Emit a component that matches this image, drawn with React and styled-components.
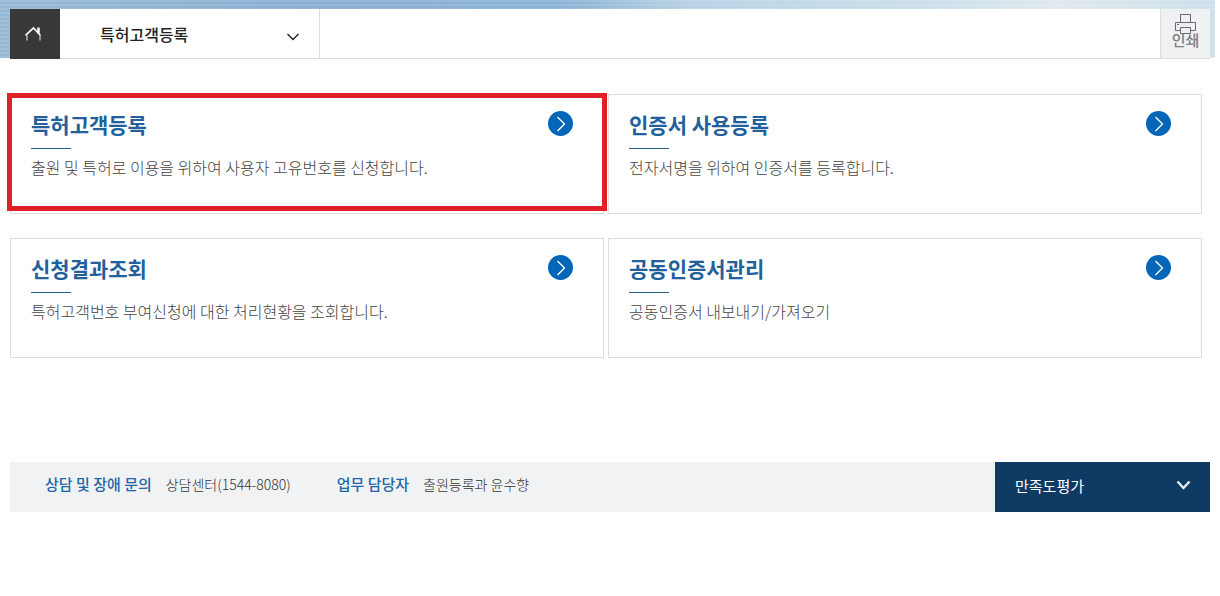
import React from "react";
import styled, { createGlobalStyle } from "styled-components";

const cards = [
  {
    title: "특허고객등록",
    text: "출원 및 특허로 이용을 위하여 사용자 고유번호를 신청합니다.",
    active: true,
  },
  { title: "인증서 사용등록", text: "전자서명을 위하여 인증서를 등록합니다." },
  {
    title: "신청결과조회",
    text: "특허고객번호 부여신청에 대한 처리현황을 조회합니다.",
  },
  { title: "공동인증서관리", text: "공동인증서 내보내기/가져오기" },
];

export default function App() {
  return (
    <>
      <GlobalStyle />
      <Page>
        <TopArea>
          <TopBar>
            <HomeLink href="#home" aria-label="홈">
              <HomeIcon />
            </HomeLink>
            <MenuBox>
              <MenuSelect aria-label="메뉴" defaultValue="특허고객등록">
                {cards.map((card) => (
                  <option key={card.title}>{card.title}</option>
                ))}
              </MenuSelect>
              <MenuArrow width="12" height="8" viewBox="0 0 12 8">
                <path d="M.5 1L6 6.5 11.5 1" fill="none" stroke="#222" strokeWidth="1.4" />
              </MenuArrow>
            </MenuBox>
            <PrintButton type="button">
              <PrintIcon />
              인쇄
            </PrintButton>
          </TopBar>
        </TopArea>

        <CardGrid>
          {cards.map((card) => (
            <Card key={card.title} href="#service" $active={card.active}>
              <div>
                <CardTitle>{card.title}</CardTitle>
                <CardText>{card.text}</CardText>
              </div>
              <GoIcon />
            </Card>
          ))}
        </CardGrid>

        <Footer>
          <Contacts>
            <dt>상담 및 장애 문의</dt>
            <dd>상담센터(1544-8080)</dd>
            <dt>업무 담당자</dt>
            <dd>출원등록과 윤수향</dd>
          </Contacts>
          <RatingButton type="button">
            만족도평가
            <svg width="16" height="12" viewBox="0 0 16 12">
              <path d="M2.5 2.5l6 6.5 6-6.5" fill="none" stroke="#e3eaf0" strokeWidth="2.4" />
            </svg>
          </RatingButton>
        </Footer>
      </Page>
    </>
  );
}

function HomeIcon() {
  return (
    <svg width="18" height="16" viewBox="0 0 18 16" fill="none" stroke="#fff">
      <path d="M.5 9.5L8.5 2l7 7.5" strokeWidth="1.6" />
      <path d="M2 9v5.5M15 9v5.5" stroke="#bbb" strokeWidth="1.4" />
      <path d="M13.5 1.5v6" strokeWidth="2.4" />
    </svg>
  );
}

function PrintIcon() {
  return (
    <svg width="22" height="20" viewBox="0 0 22 20" fill="none" stroke="#666b70">
      <path d="M5.5 8.5v-8h10v8" />
      <path d="M5.5 16.5h-5v-8h20v8h-5" />
      <path d="M5.5 13.5h10v6h-10z" />
      <path d="M2 10.5h2" />
    </svg>
  );
}

function GoIcon() {
  return (
    <svg width="25" height="25" viewBox="0 0 25 25">
      <circle cx="12.5" cy="12.5" r="12.5" fill="#0566b8" />
      <path d="M9.5 6l7 7-7 7" fill="none" stroke="#fff" strokeWidth="1.3" />
    </svg>
  );
}

const GlobalStyle = createGlobalStyle`
  * {
    box-sizing: border-box;
  }
  body {
    margin: 0;
    background: #fff;
  }
  body,
  button,
  select {
    font-family: "Noto Sans CJK KR", sans-serif;
  }
`;
const Page = styled.div`
  margin-right: 5px;
`;
const TopArea = styled.header`
  padding: 9px 5px 0 10px;
  background-image: repeating-linear-gradient(
      rgba(255, 255, 255, 0.1) 0 2px,
      transparent 2px 4px
    ),
    linear-gradient(
      to right,
      #96b9d6,
      #88afd1 26%,
      #8bb3d6 46%,
      #b8d2e4 57%,
      #cbdfeb 76%,
      #dfe9ed 87%,
      #cddfea
    );
  background-repeat: no-repeat;
  background-size: 100% 58px;
`;
const TopBar = styled.nav`
  display: flex;
  height: 50px;
  background: #fff;
`;
const HomeLink = styled.a`
  display: flex;
  align-items: center;
  justify-content: center;
  width: 50px;
  padding-right: 2px;
  background: #383838;
`;
const MenuBox = styled.div`
  position: relative;
  flex: 1;
  border-bottom: 1px solid #ddd;
`;
const MenuSelect = styled.select`
  appearance: none;
  width: 260px;
  height: 100%;
  padding: 0 40px;
  border: 0;
  border-right: 1px solid #ddd;
  background: transparent;
  color: #222;
  font-size: 16px;
  font-weight: 500;
`;
const MenuArrow = styled.svg`
  position: absolute;
  top: 24px;
  left: 227px;
  pointer-events: none;
`;
const PrintButton = styled.button`
  display: flex;
  flex-direction: column;
  align-items: center;
  width: 50px;
  padding: 5px 0 0;
  border: 0;
  border-left: 1px solid #ddd;
  border-bottom: 1px solid #ddd;
  background: #f0f1f2;
  color: #808080;
  font-size: 15px;
  font-weight: 500;
  line-height: 12px;
`;
const CardGrid = styled.main`
  display: grid;
  grid-template-columns: 1fr 1fr;
  gap: 24px 4px;
  padding: 35px 13px 0 10px;
`;
const Card = styled.a`
  position: relative;
  display: flex;
  justify-content: space-between;
  align-items: flex-start;
  min-height: 120px;
  padding: 16px 30px 16px 20px;
  border: 1px solid #ddd;
  color: #444;
  text-decoration: none;
  &::after {
    content: "";
    display: ${(props) => (props.$active ? "block" : "none")};
    position: absolute;
    inset: -2px -4px 2px -4px;
    border: 5px solid #df2029;
  }
`;
const CardTitle = styled.h2`
  margin: 0;
  color: #22609c;
  font-size: 21px;
  font-weight: 700;
  line-height: 26px;
  &::after {
    content: "";
    display: block;
    width: 40px;
    height: 1px;
    margin-top: 11px;
    background: #226084;
  }
`;
const CardText = styled.p`
  margin: 6px 0 0;
  font-size: 16px;
  font-weight: 300;
  line-height: 24px;
`;
const Footer = styled.footer`
  display: flex;
  height: 50px;
  margin: 104px 5px 0 10px;
  background: #f0f2f4;
`;
const Contacts = styled.dl`
  flex: 1;
  display: flex;
  align-items: center;
  margin: 0;
  padding: 0 35px 6px;
  line-height: 24px;
  dt {
    margin-right: 14px;
    color: #1d66a8;
    font-size: 15px;
    font-weight: 500;
  }
  dd {
    margin: 0 46px 0 0;
    color: #333;
    font-size: 14px;
    font-weight: 300;
  }
`;
const RatingButton = styled.button`
  display: flex;
  align-items: center;
  justify-content: space-between;
  width: 215px;
  padding: 0 19px 4px 20px;
  border: 0;
  background: #0e3a63;
  color: #fff;
  font-size: 15px;
`;
